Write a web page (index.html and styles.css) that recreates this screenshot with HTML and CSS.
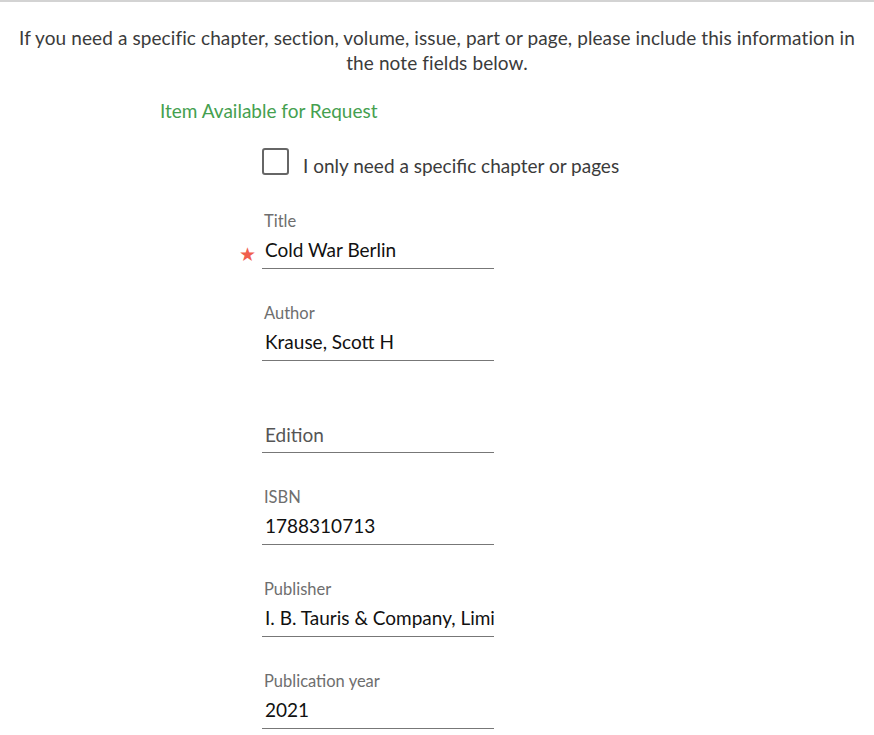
FILE: index.html
```html
<!DOCTYPE html>
<html lang="en">
<head>
  <meta charset="UTF-8" />
  <meta name="viewport" content="width=device-width, initial-scale=1" />
  <title>Request Item</title>
  <link rel="stylesheet" href="styles.css">
</head>
<body>

  <div class="page">
    <p class="intro">If you need a specific chapter, section, volume, issue, part or page, please include this information in the note fields below.</p>

    <h3 class="status">Item Available for Request</h3>

    <form class="request-form">
      <label class="check-row">
        <input type="checkbox" />
        <span class="check-box"></span>
        <span class="check-text">I only need a specific chapter or pages</span>
      </label>

      <div class="field required">
        <label class="field-label" for="title">Title</label>
        <span class="star">&#9733;</span>
        <input class="field-input" id="title" type="text" value="Cold War Berlin" />
      </div>

      <div class="field">
        <label class="field-label" for="author">Author</label>
        <input class="field-input" id="author" type="text" value="Krause, Scott H" />
      </div>

      <div class="field empty">
        <label class="field-label" for="edition">Edition</label>
        <input class="field-input" id="edition" type="text" placeholder="Edition" />
      </div>

      <div class="field">
        <label class="field-label" for="isbn">ISBN</label>
        <input class="field-input" id="isbn" type="text" value="1788310713" />
      </div>

      <div class="field">
        <label class="field-label" for="publisher">Publisher</label>
        <input class="field-input" id="publisher" type="text" value="I. B. Tauris &amp; Company, Limited" />
      </div>

      <div class="field">
        <label class="field-label" for="year">Publication year</label>
        <input class="field-input" id="year" type="text" value="2021" />
      </div>
    </form>
  </div>

</body>
</html>
```

FILE: styles.css
```css
body {
  margin: 0;
  font-family: 'Lato', 'Open Sans', sans-serif;
  color: #333;
  background: #fff;
  border-top: 2px solid #d3d3d3;
}
.page {
  padding: 0 10px;
}
.intro {
  margin: 23px 0 0;
  font-size: 19px;
  line-height: 25px;
  letter-spacing: 0.1px;
  text-align: center;
  color: #3b3b3b;
}
.status {
  margin: 24px 0 0 150px;
  font-size: 19px;
  line-height: 24px;
  font-weight: 400;
  color: #45a04f;
}
.request-form {
  display: flex;
  flex-direction: column;
  margin: 25px 0 0 252px;
}
.check-row {
  display: flex;
  align-items: flex-start;
  gap: 14px;
  cursor: pointer;
}
.check-row input {
  display: none;
}
.check-box {
  width: 23px;
  height: 23px;
  border: 2px solid #666;
  border-radius: 3px;
}
.check-text {
  font-size: 19px;
  line-height: 28px;
  padding-top: 4px;
  color: #3b3b3b;
}
.field {
  position: relative;
  display: flex;
  flex-direction: column;
  width: 232px;
  margin-top: 34px;
  border-bottom: 1px solid #777;
}
.check-row + .field {
  margin-top: 31px;
}
.field-label {
  font-size: 16.5px;
  line-height: 20px;
  color: #6e6e6e;
  padding-left: 2px;
  margin-bottom: 6px;
}
.field-input {
  border: none;
  outline: none;
  padding: 0 0 7px 3px;
  margin: 0;
  font-family: inherit;
  font-size: 19px;
  line-height: 24px;
  height: 31px;
  box-sizing: border-box;
  color: #111;
  background: transparent;
}
.field.empty .field-label {
  visibility: hidden;
}
.field.empty .field-input {
  padding-bottom: 5px;
}
.field-input::placeholder {
  color: #555;
}
.star {
  position: absolute;
  left: -23px;
  top: 31px;
  font-size: 19px;
  line-height: 24px;
  color: #f0604d;
}
```
